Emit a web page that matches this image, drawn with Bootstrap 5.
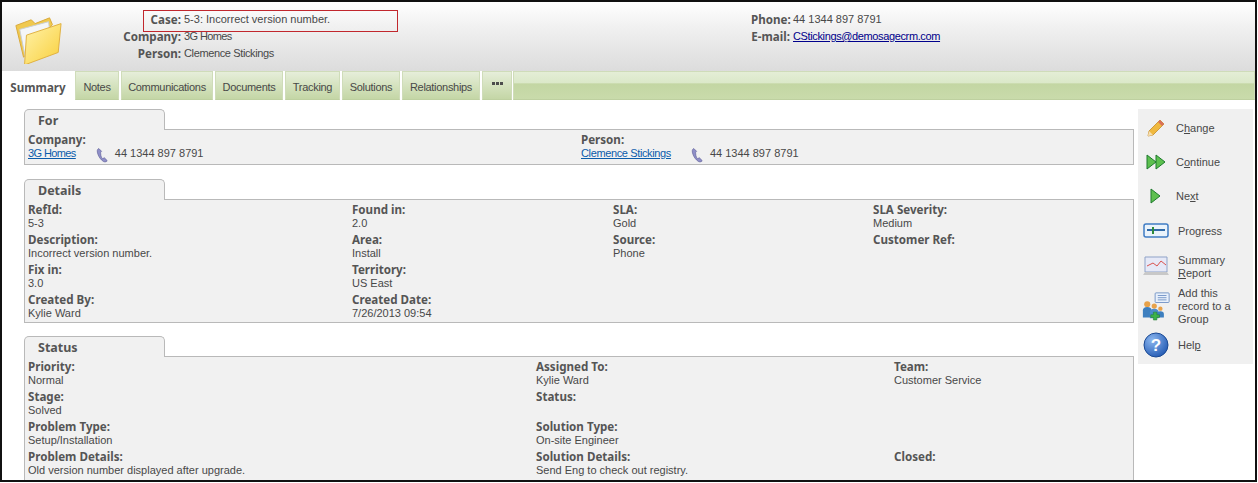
<!DOCTYPE html>
<html lang="en"><head><meta charset="utf-8"><title>Case 5-3</title>
<link href="https://cdn.jsdelivr.net/npm/bootstrap@5.3.0/dist/css/bootstrap.min.css" rel="stylesheet">
<script src="https://cdn.jsdelivr.net/npm/bootstrap@5.3.0/dist/js/bootstrap.bundle.min.js"></script>
<style>
html,body{margin:0;background:#fff;height:483px;overflow:hidden}
body{font:11px/13px "Liberation Sans",Arial,sans-serif;color:#484848}
b{font-family:"Noto Sans",sans-serif;font-size:11.6px;font-weight:700;color:#555}
.crm-tight{letter-spacing:-.37px}
.crm-tighter{letter-spacing:-.6px}
.crm-frame{width:1257px;height:482px;border:2px solid #111;overflow:hidden;position:relative}
.crm-head{height:69px;background:linear-gradient(#fff,#f1f1f1 35%,#dcdcdc);display:grid;grid-template-columns:62px 687px 1fr;padding-top:9px}
.crm-logo{margin:3px 0 0 11px}
.crm-hgrid{display:grid;grid-auto-rows:17px;align-items:center;column-gap:3px;align-self:start}
.crm-hgrid b{text-align:right;white-space:nowrap}
.crm-h1{grid-template-columns:117px 1fr}
.crm-h2{grid-template-columns:39px 1fr}
.crm-mail{color:#00008b}
.crm-red{position:absolute;left:141px;top:8px;width:255px;height:22px;border:1px solid #c1272d}
.crm-tabs{height:30px;display:flex;gap:2px;padding-left:1px}
.crm-tab{display:flex;align-items:center;justify-content:center;height:29px;padding-top:3px;border:1px solid #cfdcb9;border-bottom-color:#bed0a0;background:linear-gradient(#e6eeda,#d3e1bc 55%,#c4d6a6);color:#484848;letter-spacing:-.3px}
.crm-tab.on{background:#fff;border-color:#fff;height:30px;letter-spacing:0}
.crm-w1{width:70px}.crm-w2{width:44px}.crm-w3{width:92px}.crm-w4{width:68px}.crm-w5{width:55px}.crm-w6{width:58px}.crm-w7{width:78px}.crm-w8{width:30px;padding:0 0 5px}
.crm-dot{width:3px;height:3px;background:#4c4c4c;margin:0 .5px}
.crm-fill{flex:1;margin-left:-1px;background:linear-gradient(#e4eed6,#dbe8c9 40%,#c3d6a3 44%,#c9dbab)}
.crm-body{display:flex;padding-left:22px;padding-top:8px;gap:4px}
.crm-main{width:1110px;display:flex;flex-direction:column;gap:14px}
.crm-main section:last-child{margin-top:-1px}
.crm-ttl{width:141px;height:21px;border:1px solid #b9b9b9;border-bottom:0;border-radius:5px 5px 0 0;background:#f1f1f1;font:700 12.5px/22px "Noto Sans",sans-serif;padding-left:13px;color:#555;position:relative;z-index:1;margin-bottom:-1px}
.crm-box{border:1px solid #b9b9b9;background:#f1f1f1;padding:4px 3px 4px;display:grid;row-gap:4px}
.crm-box b{display:block;line-height:11px;margin-bottom:2px}
.crm-c2{grid-template-columns:553px 1fr}
.crm-c4{grid-template-columns:324px 261px 260px 1fr;padding-bottom:2px}
.crm-c3{grid-template-columns:508px 358px 1fr}
.crm-cell{height:26px;white-space:nowrap}
.crm-lnk{color:#0b5cab}
.crm-ph{vertical-align:-2px;margin:-4px 6px -4px 20px}
.crm-side{width:115px;height:255px;background:#f0f0f0;display:grid;grid-template-rows:38px 30px 38px 32px 39px 40px 38px;padding-left:4px}
.crm-act{display:flex;align-items:center;gap:6px}
.crm-ic{width:28px;flex:none;display:flex;justify-content:center}
.crm-gap{gap:8px}
</style></head><body>
<div class="crm-frame">
 <header class="crm-head">
  <svg class="crm-logo" width="50" height="50" viewBox="0 0 52 50"><defs><linearGradient id="fg" x1="0" y1="0" x2="1" y2="1"><stop offset="0" stop-color="#fff3ac"/><stop offset="1" stop-color="#f9cf3a"/></linearGradient></defs><path d="M3 11 L19 5 l4 4 L38 3 l3 7 -30 34z" fill="#f0c94f" stroke="#d9a93a"/><path d="M7 15 L37 7 l3 26 -27 12z" fill="#f4f6f8" stroke="#c9cfd6"/><path d="M14 21 L50 9 l-3 30 -35 13z" fill="url(#fg)" stroke="#e0b03f"/></svg>
  <div class="crm-hgrid crm-h1"><b>Case:</b><span>5-3: Incorrect version number.</span><b>Company:</b><span class="crm-tighter">3G Homes</span><b>Person:</b><span class="crm-tight">Clemence Stickings</span></div>
  <div class="crm-hgrid crm-h2"><b>Phone:</b><span>44 1344 897 8791</span><b>E-mail:</b><a class="crm-mail crm-tight" href="#">CStickings@demosagecrm.com</a></div>
  <div class="crm-red"></div>
 </header>
 <nav class="crm-tabs">
  <div class="crm-tab on crm-w1"><b>Summary</b></div><div class="crm-tab crm-w2">Notes</div><div class="crm-tab crm-w3">Communications</div><div class="crm-tab crm-w4">Documents</div><div class="crm-tab crm-w5">Tracking</div><div class="crm-tab crm-w6">Solutions</div><div class="crm-tab crm-w7">Relationships</div><div class="crm-tab crm-w8"><i class="crm-dot"></i><i class="crm-dot"></i><i class="crm-dot"></i></div><div class="crm-tab crm-fill"></div>
 </nav>
 <div class="crm-body">
  <main class="crm-main">
   <section>
    <div class="crm-ttl">For</div>
    <div class="crm-box crm-c2">
     <div class="crm-cell"><b>Company:</b><a class="crm-lnk crm-tighter" href="#">3G Homes</a><svg class="crm-ph" width="13" height="16" viewBox="0 0 14 16"><path d="M3 1c-2 1-2 3-1 6s3 6 6 8c2 1 4 0 4-1l-3-3-2 1C5 10 5 7 5 5l1-1z" fill="#8f8fc8" stroke="#5d5d96" stroke-width=".7"/></svg>44 1344 897 8791</div>
     <div class="crm-cell"><b>Person:</b><a class="crm-lnk crm-tight" href="#">Clemence Stickings</a><svg class="crm-ph" width="13" height="16" viewBox="0 0 14 16"><path d="M3 1c-2 1-2 3-1 6s3 6 6 8c2 1 4 0 4-1l-3-3-2 1C5 10 5 7 5 5l1-1z" fill="#8f8fc8" stroke="#5d5d96" stroke-width=".7"/></svg>44 1344 897 8791</div>
    </div>
   </section>
   <section>
    <div class="crm-ttl">Details</div>
    <div class="crm-box crm-c4">
     <div class="crm-cell"><b>RefId:</b>5-3</div><div class="crm-cell"><b>Found in:</b>2.0</div><div class="crm-cell"><b>SLA:</b>Gold</div><div class="crm-cell"><b>SLA Severity:</b>Medium</div>
     <div class="crm-cell"><b>Description:</b>Incorrect version number.</div><div class="crm-cell"><b>Area:</b>Install</div><div class="crm-cell"><b>Source:</b>Phone</div><div class="crm-cell"><b>Customer Ref:</b></div>
     <div class="crm-cell"><b>Fix in:</b>3.0</div><div class="crm-cell"><b>Territory:</b>US East</div><div class="crm-cell"></div><div class="crm-cell"></div>
     <div class="crm-cell"><b>Created By:</b>Kylie Ward</div><div class="crm-cell"><b>Created Date:</b>7/26/2013 09:54</div><div class="crm-cell"></div><div class="crm-cell"></div>
    </div>
   </section>
   <section>
    <div class="crm-ttl">Status</div>
    <div class="crm-box crm-c3">
     <div class="crm-cell"><b>Priority:</b>Normal</div><div class="crm-cell"><b>Assigned To:</b>Kylie Ward</div><div class="crm-cell"><b>Team:</b>Customer Service</div>
     <div class="crm-cell"><b>Stage:</b>Solved</div><div class="crm-cell"><b>Status:</b></div><div class="crm-cell"></div>
     <div class="crm-cell"><b>Problem Type:</b>Setup/Installation</div><div class="crm-cell"><b>Solution Type:</b>On-site Engineer</div><div class="crm-cell"></div>
     <div class="crm-cell"><b>Problem Details:</b>Old version number displayed after upgrade.</div><div class="crm-cell"><b>Solution Details:</b>Send Eng to check out registry.</div><div class="crm-cell"><b>Closed:</b></div>
    </div>
   </section>
  </main>
  <aside class="crm-side">
   <div class="crm-act"><span class="crm-ic"><svg width="20" height="20" viewBox="0 0 20 20"><path d="M2 18l1-5L14 2l4 4L7 17z" fill="#f0b93f" stroke="#c48a2a" stroke-width=".8"/><path d="M14 2l4 4-2 2-4-4z" fill="#d9705a"/><path d="M2 18l1-5 4 4z" fill="#f5dfb5"/></svg></span><span>C<u>h</u>ange</span></div>
   <div class="crm-act"><span class="crm-ic"><svg width="20" height="16" viewBox="0 0 20 16"><path d="M1 1l9 7-9 7z" fill="#5dc04f" stroke="#1e7b2e"/><path d="M10 1l9 7-9 7z" fill="#5dc04f" stroke="#1e7b2e"/></svg></span><span>C<u>o</u>ntinue</span></div>
   <div class="crm-act"><span class="crm-ic"><svg width="12" height="16" viewBox="0 0 12 16"><path d="M1 1l9 7-9 7z" fill="#5dc04f" stroke="#1e7b2e"/></svg></span><span>Ne<u>x</u>t</span></div>
   <div class="crm-act crm-gap"><span class="crm-ic"><svg width="26" height="16" viewBox="0 0 26 16"><rect x="1" y="1" width="24" height="13" rx="2" fill="#eaf3fb" stroke="#3f7cc4" stroke-width="1.5"/><path d="M4 7h18" stroke="#2f6aa8" stroke-width="2"/><path d="M10 4v7" stroke="#2e8b3c" stroke-width="2"/></svg></span><span>Progress</span></div>
   <div class="crm-act crm-gap"><span class="crm-ic"><svg width="28" height="21" viewBox="0 0 28 21"><path d="M3 1h22v15H3z" fill="#e6e9f7" stroke="#8fa3c8"/><path d="M5 10l6-3 4 3 4-5 5 4" fill="none" stroke="#d9534f"/><path d="M1 19h26l-2-3H3z" fill="#c8c8c8"/></svg></span><span>Summary<br><u>R</u>eport</span></div>
   <div class="crm-act crm-gap"><span class="crm-ic"><svg width="32" height="32" viewBox="0 0 32 32"><rect x="15" y="1" width="16" height="11" rx="1" fill="#e8f0fb" stroke="#6d8fc4"/><path d="M18 4h10M18 6.500h10M18 9h10" stroke="#6d8fc4"/><circle cx="6" cy="14" r="3.500" fill="#e8a24a"/><path d="M1 29v-8q0-4 5-4t5 4v8z" fill="#3d7fbf"/><circle cx="14" cy="16" r="3" fill="#e8a24a"/><path d="M9 30v-7q0-4 5-4t5 4v7z" fill="#4a8ccc"/><circle cx="21" cy="19" r="2.500" fill="#e8a24a"/><path d="M17 29v-4q0-3 4-3t4 3v4z" fill="#3d7fbf"/><path d="M10 26h3v-3h4v3h3v3h-3v3h-4v-3h-3z" fill="#3cb34a" stroke="#1e7b2e" stroke-width=".6"/></svg></span><span>Add this<br>record to a<br>Group</span></div>
   <div class="crm-act crm-gap"><span class="crm-ic"><svg width="26" height="26" viewBox="0 0 26 26"><defs><radialGradient id="hb" cx=".35" cy=".3" r=".8"><stop offset="0" stop-color="#8db8f0"/><stop offset="1" stop-color="#1d55b0"/></radialGradient></defs><circle cx="13" cy="13" r="12" fill="url(#hb)" stroke="#1b4a94"/><text x="13" y="19" text-anchor="middle" font-family="Liberation Sans" font-weight="700" font-size="17" fill="#fff">?</text></svg></span><span>Hel<u>p</u></span></div>
  </aside>
 </div>
</div>
</body></html>
